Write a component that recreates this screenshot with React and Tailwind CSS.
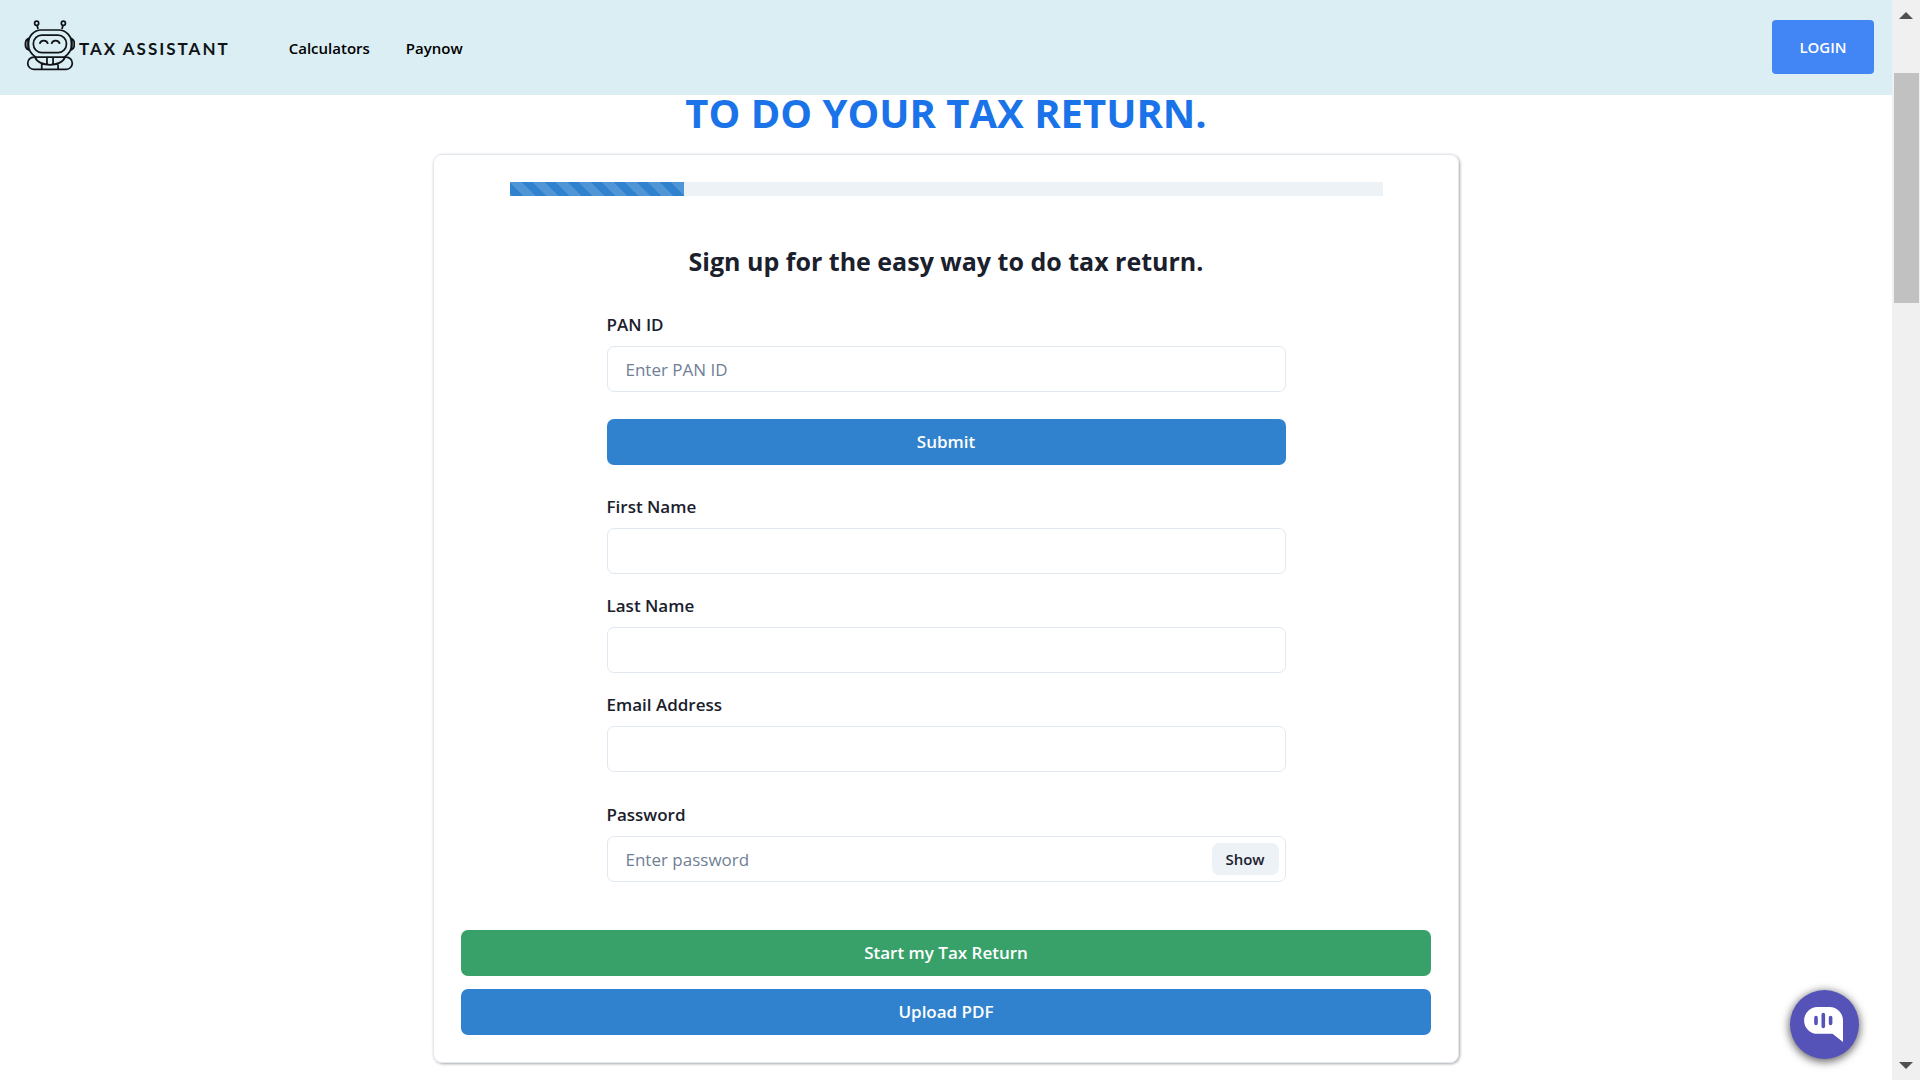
import React, { useState } from "react";

function RobotLogo() {
  return (
    <svg
      className="h-[51px] w-[51px]"
      viewBox="0 0 50 50"
      fill="none"
      stroke="#101418"
      strokeWidth="1.7"
      aria-hidden="true"
    >
      <circle cx="12.4" cy="3.2" r="2" />
      <circle cx="38.6" cy="3.2" r="2" />
      <path d="M12.8 5.4l1 3.4M38.2 5.4l-1 3.4" />
      <path
        d="M4.2 18.2c-3.8 1.6-3.8 9.4 0 11zM46.6 18.2c3.8 1.6 3.8 9.4 0 11z"
        fill="#101418"
        fillOpacity="0.35"
      />
      <path d="M17 9.8h17c7.5 0 12.8 6.3 12.8 13.8 0 6-3 10-7.3 12.8h-28C7.2 33.6 4.2 29.6 4.2 23.6 4.2 16.1 9.5 9.8 17 9.8z" />
      <rect x="9.2" y="14.8" width="32.4" height="17.2" rx="8.2" />
      <path d="M15.4 23.4c.8-4.3 7.2-4.3 8 0M27 23.4c.8-4.3 7.2-4.3 8 0" />
      <path d="M11.5 36.4H9.6a5.95 5.95 0 0 0 0 11.9h31.8a5.95 5.95 0 0 0 0-11.9h-1.9" />
      <path d="M10.8 36.4c3.4 10 26 10 29.4 0M22.5 36.4v7.2M28.5 36.4v7.2M17.4 43v5.3M33.4 43v5.3" />
    </svg>
  );
}

function Header() {
  return (
    <header className="flex h-[95px] shrink-0 items-center bg-[#daeef3] pr-[18px] pb-px pl-6">
      <a href="#home" className="mb-1 flex items-center gap-1 text-[#101418]">
        <RobotLogo />
        <span className="pt-2 font-['Lato',sans-serif] text-[17px] leading-6 font-bold tracking-[2px] whitespace-nowrap">
          TAX ASSISTANT
        </span>
      </a>
      <nav className="ml-[59px] flex gap-9 pt-px text-[15px] leading-6 font-semibold text-black">
        <a href="#calculators">Calculators</a>
        <a href="#paynow">Paynow</a>
      </nav>
      <button
        type="button"
        className="ml-auto h-[54px] w-[102px] rounded-[4px] bg-[#4285f4] text-[15px] font-semibold text-white"
      >
        LOGIN
      </button>
    </header>
  );
}

const inputClass =
  "h-[46px] w-full rounded-[7px] border border-[#e2e8f0] bg-white px-[18px] pt-px text-[17px] text-[#1a202c] outline-none placeholder:text-[#718096]";

function Field({ id, label, children, ...rest }) {
  return (
    <div className="flex flex-col gap-[6px]">
      <label htmlFor={id} className="text-[17px] leading-[30px] font-semibold text-[#1a202c]">
        {label}
      </label>
      {children ?? <input id={id} className={inputClass} {...rest} />}
    </div>
  );
}

function SignUpCard() {
  const [visible, setVisible] = useState(false);
  const progress = 20;
  return (
    <form
      onSubmit={(e) => e.preventDefault()}
      className="mx-auto w-full max-w-[1026px] rounded-[9px] border border-[#e2e8f0] px-[27px] py-[27px] shadow-[1px_1px_3px_0px_rgba(0,0,0,0.35)]"
    >
      <div className="mx-[5%] h-[14px] bg-[#edf2f7]">
        <div
          role="progressbar"
          aria-label="Sign up progress"
          aria-valuenow={progress}
          className="h-full bg-[#3182ce] bg-[linear-gradient(45deg,rgba(255,255,255,0.15)_25%,transparent_25%,transparent_50%,rgba(255,255,255,0.15)_50%,rgba(255,255,255,0.15)_75%,transparent_75%,transparent)] bg-[size:23px_23px]"
          style={{ width: `${progress}%` }}
        />
      </div>
      <h2 className="mt-[47px] text-center text-[25px] leading-9 font-bold text-[#1a202c]">
        Sign up for the easy way to do tax return.
      </h2>
      <div className="mx-[15%] mt-[31px] flex flex-col">
        <Field id="pan" label="PAN ID" type="text" placeholder="Enter PAN ID" />
        <button
          type="button"
          className="mt-[27px] h-[46px] rounded-[7px] bg-[#3182ce] text-[17px] font-semibold text-white"
        >
          Submit
        </button>
        <div className="mt-[27px] flex flex-col gap-[17px]">
          <Field id="first" label="First Name" type="text" />
          <Field id="last" label="Last Name" type="text" />
          <Field id="email" label="Email Address" type="email" />
        </div>
        <div className="mt-7">
          <Field id="password" label="Password">
            <div className="relative">
              <input
                id="password"
                type={visible ? "text" : "password"}
                placeholder="Enter password"
                className={inputClass}
              />
              <button
                type="button"
                onClick={() => setVisible(!visible)}
                className="absolute top-[7px] right-[7px] h-8 w-[67px] rounded-[7px] bg-[#edf2f7] text-[15px] font-semibold text-[#1a202c]"
              >
                {visible ? "Hide" : "Show"}
              </button>
            </div>
          </Field>
        </div>
      </div>
      <button
        type="submit"
        className="mt-12 h-[46px] w-full rounded-[7px] bg-[#38a169] text-[17px] font-semibold text-white"
      >
        Start my Tax Return
      </button>
      <button
        type="button"
        className="mt-[13px] h-[46px] w-full rounded-[7px] bg-[#3182ce] text-[17px] font-semibold text-white"
      >
        Upload PDF
      </button>
    </form>
  );
}

function ChatButton() {
  return (
    <button
      type="button"
      aria-label="Open chat"
      className="fixed right-[61px] bottom-[21px] flex h-[69px] w-[69px] items-center justify-center rounded-full bg-[#5552b8] pr-[2px] shadow-[0_2px_8px_1px_rgba(0,0,0,0.6)]"
    >
      <svg className="h-[35px] w-[39px]" viewBox="0 0 39 35" aria-hidden="true">
        <path
          d="M13.5 0h12A13.4 13.4 0 0 1 39 13.4V35l-10.5-8.2h-15a13.4 13.4 0 0 1 0-26.8z"
          fill="#fff"
        />
        <path
          d="M12 10.500v6M19.300 7.500v12M26.600 10.500v6"
          stroke="#5552b8"
          strokeWidth="3.600"
          strokeLinecap="round"
        />
      </svg>
    </button>
  );
}

function ScrollBar() {
  return (
    <div aria-hidden="true" className="flex w-7 shrink-0 flex-col items-center bg-[#f0f0f0] pt-3 pb-[11px]">
      <svg className="h-[7px] w-[14px]" viewBox="0 0 14 7">
        <path d="M7 0l7 7H0z" fill="#505050" />
      </svg>
      <div className="mt-[54px] h-[230px] w-[25px] bg-[#c1c1c1]" />
      <svg className="mt-auto h-[7px] w-[14px]" viewBox="0 0 14 7">
        <path d="M0 0h14L7 7z" fill="#505050" />
      </svg>
    </div>
  );
}

export default function App() {
  return (
    <div className="flex h-screen overflow-hidden bg-white font-['Open_Sans','Noto_Sans',sans-serif]">
      <div className="flex min-w-0 flex-1 flex-col">
        <Header />
        <main className="flex-1">
          <h1 className="text-center text-[40px] leading-9 font-bold text-[#1a73e8]">
            TO DO YOUR TAX RETURN.
          </h1>
          <div className="pt-[23px]">
            <SignUpCard />
          </div>
        </main>
      </div>
      <ScrollBar />
      <ChatButton />
    </div>
  );
}
